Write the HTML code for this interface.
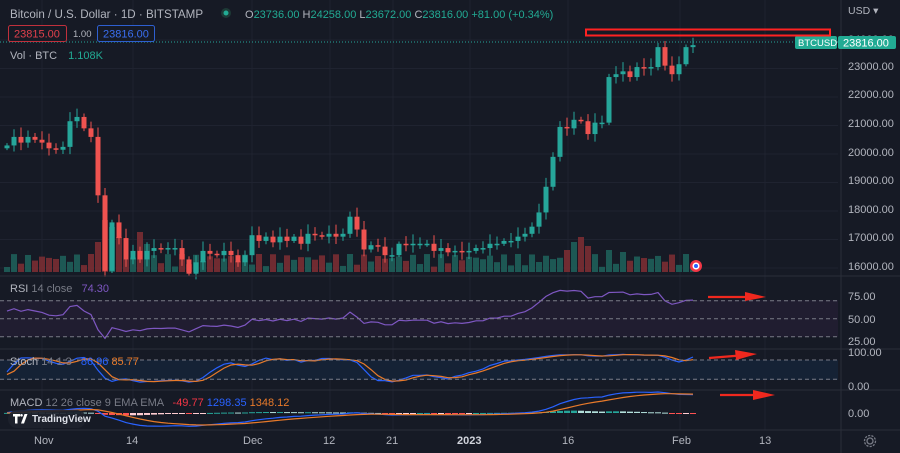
<!DOCTYPE html><html><head><meta charset="utf-8"><style>
body{margin:0;background:#161a25;width:900px;height:453px;overflow:hidden;font-family:"Liberation Sans",sans-serif}
svg{display:block}
text{font-family:"Liberation Sans",sans-serif}
</style></head><body>
<svg id="s" width="900" height="453" viewBox="0 0 900 453" xmlns="http://www.w3.org/2000/svg">
<rect width="900" height="453" fill="#161a25"/>
<g id="grid"></g>
<rect x="0" y="300" width="838" height="37" fill="#201d30"/>
<rect x="0" y="360" width="838" height="20" fill="#152235"/>
<g id="vol"></g><g id="cand"></g><g id="ind"></g>
<line x1="0" y1="42" x2="838" y2="42" stroke="#26a69a" stroke-dasharray="1 2" stroke-width="1"/>
<line x1="0" y1="276" x2="900" y2="276" stroke="#2a2e39"/>
<line x1="0" y1="349" x2="900" y2="349" stroke="#2a2e39"/>
<line x1="0" y1="390" x2="900" y2="390" stroke="#2a2e39"/>
<line x1="0" y1="430" x2="900" y2="430" stroke="#2a2e39"/>
<line x1="841" y1="0" x2="841" y2="453" stroke="#2a2e39"/>
<g stroke="#787b86" stroke-dasharray="4 3" stroke-width="1">
<line x1="0" y1="300.7" x2="838" y2="300.7"/><line x1="0" y1="318.7" x2="838" y2="318.7"/><line x1="0" y1="336.7" x2="838" y2="336.7"/>
<line x1="0" y1="360" x2="838" y2="360"/><line x1="0" y1="379.3" x2="838" y2="379.3"/></g>
<g fill="#b2b5be" font-size="11">
<text x="848" y="14" font-size="10.5">USD ▾</text>
<text x="848" y="43">24000.00</text><text x="848" y="70">23000.00</text><text x="848" y="98">22000.00</text><text x="848" y="127">21000.00</text><text x="848" y="156">20000.00</text><text x="848" y="184">19000.00</text><text x="848" y="213">18000.00</text><text x="848" y="241">17000.00</text><text x="848" y="270">16000.00</text>
<text x="848" y="300">75.00</text><text x="848" y="323">50.00</text><text x="848" y="345">25.00</text>
<text x="848" y="356">100.00</text><text x="848" y="390">0.00</text><text x="848" y="417">0.00</text>
<text x="34" y="444">Nov</text><text x="126" y="444">14</text><text x="243" y="444">Dec</text><text x="323" y="444">12</text><text x="386" y="444">21</text><text x="457" y="444" font-weight="bold" fill="#d1d4dc">2023</text><text x="562" y="444">16</text><text x="672" y="444">Feb</text><text x="759" y="444">13</text>
</g>
<g transform="translate(870,441)" stroke="#787b86" fill="none" stroke-width="1.3"><circle r="3"/><circle r="5.5" stroke-dasharray="2.2 1.2"/></g>
<rect x="795" y="36" width="42" height="13" rx="2" fill="#22ab94"/><text x="798" y="46" font-size="9.5" fill="#fff">BTCUSD</text>
<rect x="838" y="36" width="58" height="13" rx="2" fill="#22ab94"/><text x="843" y="46.5" font-size="11" fill="#fff">23816.00</text>
<rect x="586" y="29.5" width="244" height="6" fill="none" stroke="#f22" stroke-width="2"/>
<g fill="#f0281e" stroke="#f0281e" stroke-width="2.2">
<line x1="708" y1="297" x2="750" y2="297"/><polygon points="745,292 766,297 745,301" stroke="none"/>
<line x1="709" y1="358" x2="740" y2="355.5"/><polygon points="735,350 757,354 736,360" stroke="none"/>
<line x1="720" y1="395" x2="758" y2="395"/><polygon points="753,390 775,395 753,400" stroke="none"/>
</g>
<text x="10" y="18" font-size="11.6" fill="#b2b5be">Bitcoin / U.S. Dollar · 1D · BITSTAMP</text>
<circle cx="226" cy="13" r="5" fill="#1d3a36"/><circle cx="226" cy="13" r="2.5" fill="#22ab94"/>
<text x="245" y="18" font-size="11" fill="#b2b5be">O<tspan fill="#22ab94">23736.00</tspan> H<tspan fill="#22ab94">24258.00</tspan> L<tspan fill="#22ab94">23672.00</tspan> C<tspan fill="#22ab94">23816.00 +81.00 (+0.34%)</tspan></text>
<rect x="8.5" y="25.5" width="58" height="16" rx="2" fill="#161a25" stroke="#c0303c"/><text x="14" y="37.5" font-size="11" fill="#e0404c">23815.00</text>
<text x="73" y="37" font-size="9.5" fill="#b2b5be">1.00</text>
<rect x="97.5" y="25.5" width="57" height="16" rx="2" fill="#161a25" stroke="#2e5fd0"/><text x="103" y="37.5" font-size="11" fill="#3a6ef0">23816.00</text>
<text x="10" y="59" font-size="11" fill="#b2b5be">Vol · BTC <tspan dx="8" fill="#22ab94">1.108K</tspan></text>
<text x="10" y="292" font-size="11" fill="#b2b5be">RSI <tspan fill="#787b86">14 close</tspan> <tspan dx="6" fill="#7e57c2">74.30</tspan></text>
<text x="10" y="365" font-size="11" fill="#b2b5be">Stoch <tspan fill="#787b86">14 1 3</tspan> <tspan dx="6" fill="#2962ff">86.96</tspan> <tspan fill="#e87a2a">85.77</tspan></text>
<text x="10" y="406" font-size="11" fill="#b2b5be">MACD <tspan fill="#787b86">12 26 close 9 EMA EMA</tspan> <tspan dx="6" fill="#f23645">-49.77</tspan> <tspan fill="#2962ff">1298.35</tspan> <tspan fill="#e87a2a">1348.12</tspan></text>
<rect x="8" y="410" width="78" height="18" rx="9" fill="#1e222d" opacity="0.9"/>
<path d="M13 414h7v2.5h-2.5v7h-2.5v-7h-2z M21 423.5l3.5-9.5h3l-3.5 9.5z" fill="#fff"/><circle cx="21.5" cy="415.3" r="1.3" fill="#fff"/>
<text x="32" y="422" font-size="10" fill="#e0e3eb" font-weight="bold">TradingView</text>
<circle cx="696" cy="266" r="6" fill="#f23645"/><circle cx="696" cy="266" r="3.5" fill="#fff"/><circle cx="696" cy="266" r="2" fill="#2962ff"/>
</svg>
<script>
var NS="http://www.w3.org/2000/svg";
function el(p,t,a){var e=document.createElementNS(NS,t);for(var k in a)e.setAttribute(k,a[k]);document.getElementById(p).appendChild(e);return e;}
var C=[20.3,20.6,20.4,20.6,20.5,20.4,20.2,20.15,20.25,21.15,21.3,20.9,20.6,18.55,15.9,17.6,17.05,16.3,16.6,16.3,16.6,16.7,16.65,16.7,16.7,16.3,15.8,16.2,16.6,16.5,16.45,16.6,16.45,16.2,16.45,17.15,16.95,17.1,16.9,17.1,16.95,17.1,16.85,17.2,17.15,17.1,17.2,17.1,17.2,17.8,17.35,16.65,16.8,16.75,16.45,16.45,16.85,16.8,16.85,16.85,16.85,16.6,16.7,16.55,16.6,16.55,16.6,16.7,16.7,16.85,16.85,16.95,16.95,17.1,17.2,17.45,17.95,18.85,19.9,20.95,20.9,21.2,21.15,20.7,21.1,21.1,22.7,22.8,22.9,22.7,23.05,23.0,23.05,23.75,23.1,22.8,23.15,23.75,23.82];
[42,133,252,330,393,470,568,680,765].forEach(function(x){el("grid","line",{x1:x,y1:0,x2:x,y2:430,stroke:"#1f2330"});});
for(var p=16;p<=24;p++){var y=268-(p-16)*28.5;el("grid","line",{x1:0,y1:y,x2:838,y2:y,stroke:"#1f2330"});}
function px(i){return 42+(i-5)*7;}
function py(p){return 268-(p-16)*28.5;}
var spikes={13:30,14:52,15:45,16:35,19:40,20:28,80:22,81:30,82:35,83:26,86:22,88:20};
for(var i=0;i<C.length;i++){
 var o=i?C[i-1]:20.2,c=C[i],up=c>=o;
 var col=up?"#26a69a":"#ef5350";
 var h=spikes[i]||(5+Math.abs(Math.sin(i*1.7))*13);
 el("vol","rect",{x:px(i)-3,y:272-h,width:6,height:h,fill:up?"#1e5f5a":"#7a2e33",opacity:0.9});
 var w=0.08+Math.abs(Math.sin(i*2.3))*0.25;
 var hi=Math.max(o,c)+w,lo=Math.min(o,c)-w*0.8;
 el("cand","line",{x1:px(i),y1:py(hi),x2:px(i),y2:py(lo),stroke:col,"stroke-width":1});
 var t=py(Math.max(o,c)),b=py(Math.min(o,c));
 el("cand","rect",{x:px(i)-2.5,y:t,width:5,height:Math.max(1.5,b-t),fill:col});
}
var W=[];for(var j=0;j<35;j++)W.push(19.6+Math.sin(j*0.9)*0.35);
var A=W.concat(C),off=W.length;
var ag=0,al=0,rsi=[];
for(var i=1;i<A.length;i++){var d=A[i]-A[i-1],g=Math.max(d,0),l=Math.max(-d,0);
 if(i<=14){ag+=g/14;al+=l/14;}else{ag=(ag*13+g)/14;al=(al*13+l)/14;}
 rsi[i]=al==0?100:100-100/(1+ag/al);}
var pts=[];for(var i=0;i<C.length;i++){var v=rsi[i+off];pts.push(px(i)+","+(336.7-(v-25)*0.72).toFixed(1));}
el("ind","polyline",{points:pts.join(" "),fill:"none",stroke:"#7e57c2","stroke-width":1.2});
var K=[];for(var i=0;i<A.length;i++){var lo=1e9,hi=-1e9;for(var k=Math.max(0,i-13);k<=i;k++){lo=Math.min(lo,A[k]-0.15);hi=Math.max(hi,A[k]+0.15);}K[i]=100*(A[i]-lo)/(hi-lo);}
var Ks=[],Ds=[];for(var i=0;i<A.length;i++){Ks[i]=i>1?(K[i]+K[i-1]+K[i-2])/3:K[i];}
for(var i=0;i<A.length;i++){Ds[i]=i>1?(Ks[i]+Ks[i-1]+Ks[i-2])/3:Ks[i];}
function sy(v){return 379.3-(v-20)*0.322;}
var p1=[],p2=[];for(var i=0;i<C.length;i++){p1.push(px(i)+","+sy(Ks[i+off]).toFixed(1));p2.push(px(i)+","+sy(Ds[i+off]).toFixed(1));}
el("ind","polyline",{points:p1.join(" "),fill:"none",stroke:"#2962ff","stroke-width":1.2});
el("ind","polyline",{points:p2.join(" "),fill:"none",stroke:"#e87a2a","stroke-width":1.2});
function ema(a,n){var r=[],k=2/(n+1);r[0]=a[0];for(var i=1;i<a.length;i++)r[i]=a[i]*k+r[i-1]*(1-k);return r;}
var e12=ema(A,12),e26=ema(A,26),m=[];for(var i=0;i<A.length;i++)m[i]=(e12[i]-e26[i])*1000;
var sg=ema(m,9);
function my(v){return 413-v*0.014;}
var q1=[],q2=[];
for(var i=0;i<C.length;i++){var ii=i+off,h=m[ii]-sg[ii],hp=m[ii-1]-sg[ii-1];
 var col=h>=0?(h>=hp?"#26a69a":"#b2dfdb"):(h<hp?"#ff5252":"#ffcdd2");
 var y0=my(0),y1=my(h*0.35);el("ind","rect",{x:px(i)-3,y:Math.min(y0,y1),width:6,height:Math.max(1,Math.abs(y1-y0)),fill:col});
 q1.push(px(i)+","+my(m[ii]).toFixed(1));q2.push(px(i)+","+my(sg[ii]).toFixed(1));}
el("ind","polyline",{points:q1.join(" "),fill:"none",stroke:"#2962ff","stroke-width":1.2});
el("ind","polyline",{points:q2.join(" "),fill:"none",stroke:"#e87a2a","stroke-width":1.2});
</script>
</body></html>
